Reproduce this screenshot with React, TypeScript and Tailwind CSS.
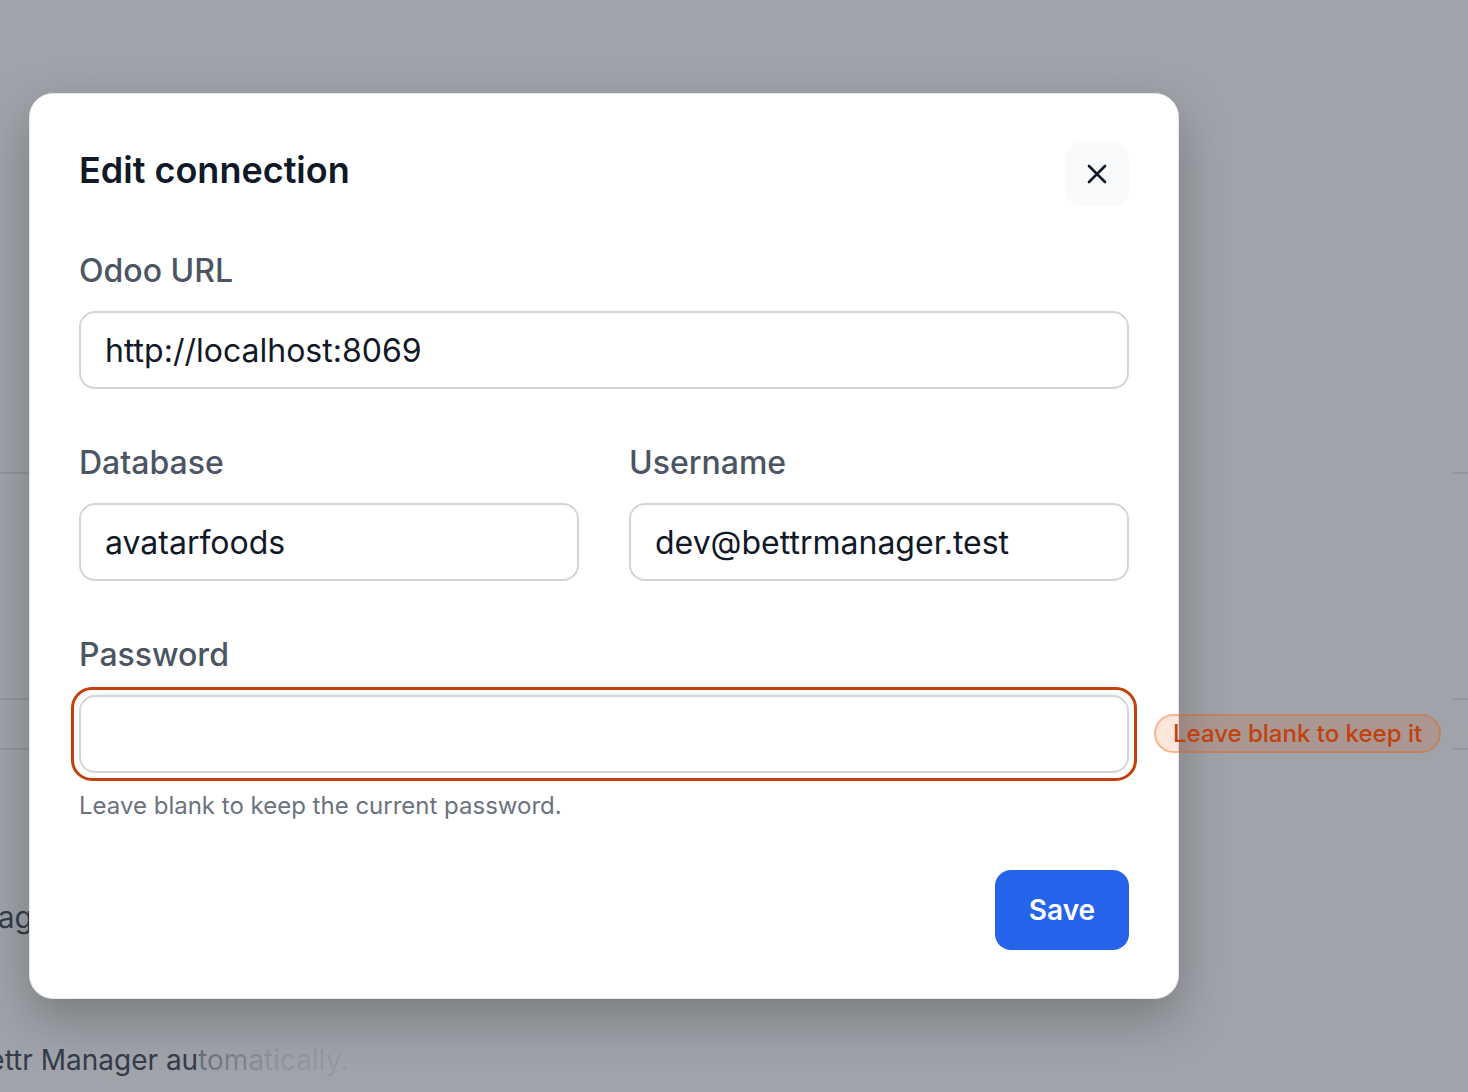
import React from "react";

const font = { fontFamily: "Inter, 'Noto Sans', sans-serif" };

function Field({
  label,
  value,
  children,
}: {
  label: string;
  value?: string;
  children?: React.ReactNode;
}) {
  return (
    <div className="flex flex-col gap-[20px]">
      <label className="text-[32px] leading-[40px] font-medium text-[#4b5563]">{label}</label>
      <div className="relative">
        <input
          readOnly
          value={value ?? ""}
          className="h-[78px] w-full rounded-[16px] border-2 border-[#d4d4d8] bg-white px-[24px] text-[32px] text-[#111827] outline-none"
          style={font}
        />
        {children}
      </div>
    </div>
  );
}

function Rules() {
  return (
    <>
      <div className="h-[474px] border-b-2 border-[#e8e9ec]" />
      <div className="h-[226px] border-b-2 border-[#e8e9ec]" />
      <div className="h-[50px] border-b-2 border-[#e8e9ec]" />
    </>
  );
}

export default function App() {
  return (
    <div className="relative h-[1092px] w-[1468px] overflow-hidden bg-white" style={font}>
      {/* settings page behind the dialog */}
      <div className="flex h-full">
        <div className="flex w-[1180px] flex-col">
          <Rules />
          <div className="ml-[-64px] mt-[152px] text-[30px] leading-[30px] text-[#4b5563]">Manage</div>
          <div className="ml-[-30px] mt-[113px] text-[28px] leading-[30px] text-[#4b5563]">
            Bettr Manager au
            <span className="bg-gradient-to-r from-[#a3a8b0] via-[#e5e7eb] to-[#eef0f2] bg-clip-text text-transparent">
              tomatically.
            </span>
          </div>
        </div>
        <div className="w-[273px]" />
        <div className="flex flex-1 flex-col">
          <Rules />
        </div>
      </div>

      {/* backdrop */}
      <div className="absolute inset-0 bg-[#111827]/40" />

      {/* dialog */}
      <div className="absolute left-[29px] top-[93px] flex h-[906px] w-[1150px] flex-col rounded-[24px] border border-[#e5e7eb] bg-white px-[49px] pt-[48px] shadow-[0_20px_50px_rgba(0,0,0,0.25)]">
        <div className="flex h-[64px] items-center justify-between">
          <h2 className="mt-[-8px] text-[36px] font-semibold text-[#111827]">Edit connection</h2>
          <button className="flex h-[64px] w-[64px] items-center justify-center rounded-[16px] bg-[#f8fafc]">
            <svg width="20" height="20" viewBox="0 0 20 20" fill="none" stroke="#111827" strokeWidth="2.6" strokeLinecap="round">
              <path d="M2 2 L18 18 M18 2 L2 18" />
            </svg>
          </button>
        </div>

        <div className="mt-[45px] flex flex-col gap-[54px]">
          <Field label="Odoo URL" value="http://localhost:8069" />
          <div className="grid grid-cols-2 gap-[50px]">
            <Field label="Database" value="avatarfoods" />
            <Field label="Username" value="dev@bettrmanager.test" />
          </div>
          <div className="flex flex-col">
            <Field label="Password">
              <div className="pointer-events-none absolute inset-[-8px] rounded-[21px] border-[3px] border-[#c2410c]" />
            </Field>
            <p className="mt-[17px] text-[24px] leading-[32px] text-[#6b7280]">
              Leave blank to keep the current password.
            </p>
          </div>
        </div>

        <div className="mt-[48px] flex justify-end">
          <button className="h-[80px] w-[134px] rounded-[16px] bg-[#2563eb] text-[28px] font-semibold text-white">
            Save
          </button>
        </div>
      </div>

      {/* hint badge beside the password field */}
      <div className="absolute left-[1154px] top-[714px] flex h-[39px] items-center rounded-full border-2 border-[#ea580c]/35 bg-[#ea580c]/15 px-[17px] text-[24px] font-medium text-[#c2410c]">
        Leave blank to keep it
      </div>
    </div>
  );
}
